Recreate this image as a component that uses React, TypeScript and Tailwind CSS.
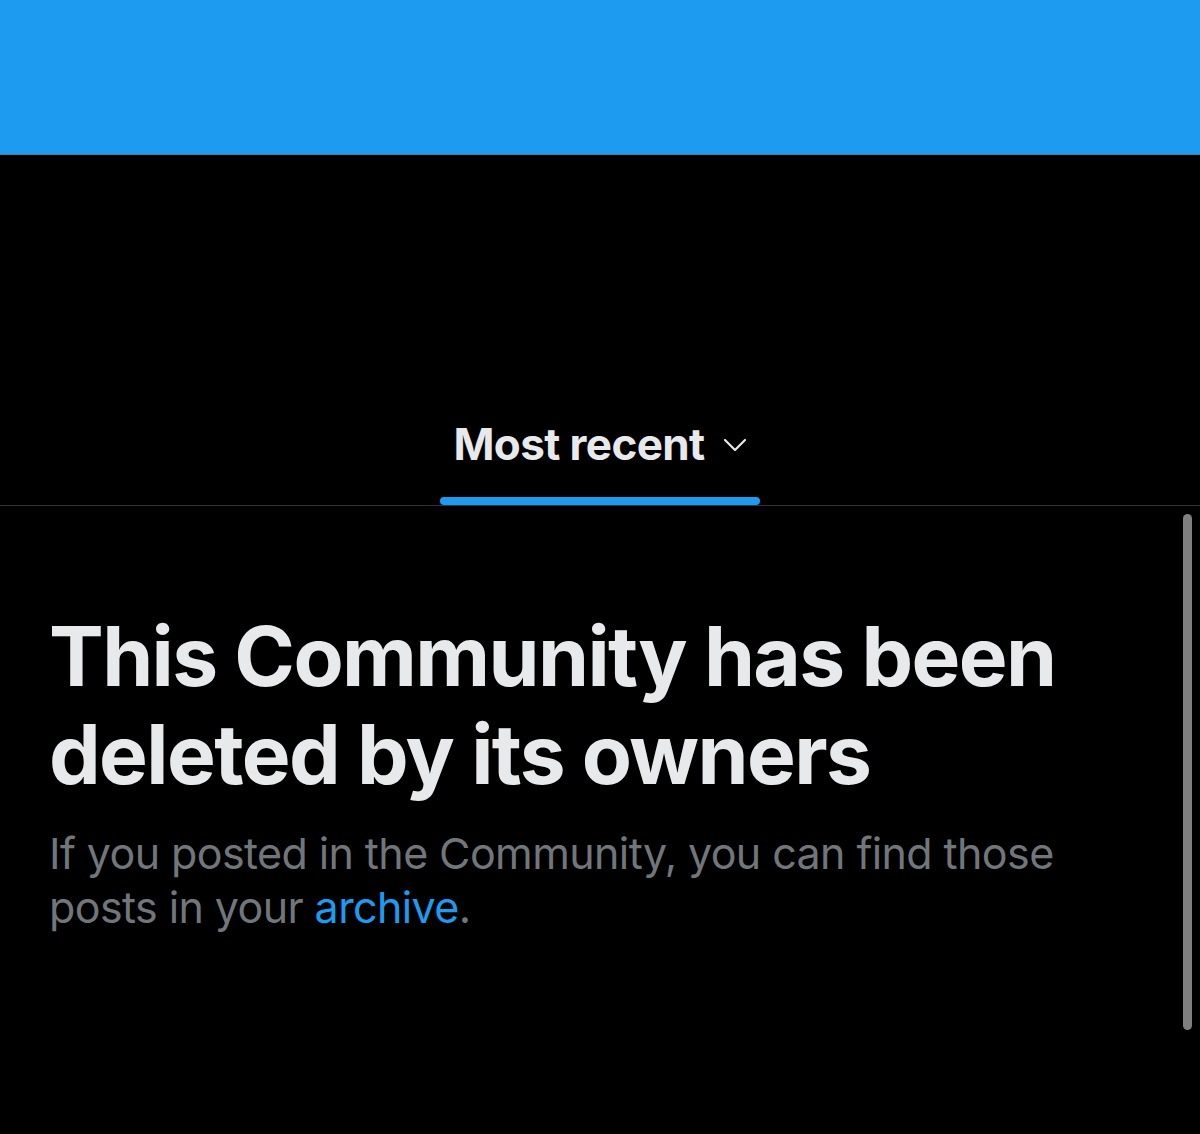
import React from "react";

export default function App() {
  return (
    <div
      className="relative w-[1200px] h-[1134px] bg-black overflow-hidden"
      style={{ fontFamily: "Inter, 'Noto Sans', sans-serif" }}
    >
      <div className="h-[155px] bg-[#1d9bf0] border-b border-[#3a7fb0]" />

      <div className="flex justify-center pt-[264px] border-b border-[#2f3336]">
        <div className="flex flex-col items-center w-[320px]">
          <div className="flex items-center gap-[18px] h-[50px]">
            <span className="text-[44px] font-bold text-[#e7e9ea] tracking-[-0.6px] leading-none">
              Most recent
            </span>
            <svg width="24" height="16" viewBox="0 0 24 16" className="mt-[2px]">
              <path d="M2 3 L12 13 L22 3" fill="none" stroke="#e7e9ea" strokeWidth="2.2" strokeLinecap="round" strokeLinejoin="round" />
            </svg>
          </div>
          <div className="mt-[28px] h-[8px] w-full rounded-full bg-[#1d9bf0]" />
        </div>
      </div>

      <div className="pl-[49px] pt-[102px] pr-[60px]">
        <h1 className="text-[82px] font-bold leading-[98px] text-[#e7e9ea] tracking-[-1.6px]">
          This Community has been deleted by its owners
        </h1>
        <p className="mt-[22px] text-[43px] leading-[54px] text-[#71767b] tracking-[-0.6px] max-w-[1060px]">
          If you posted in the Community, you can find those posts in your{" "}
          <span className="text-[#1d9bf0]">archive</span>.
        </p>
      </div>

      <div className="absolute left-[1183px] top-[514px] w-[9px] h-[516px] rounded-full bg-[#7f7f7f]" />
    </div>
  );
}
